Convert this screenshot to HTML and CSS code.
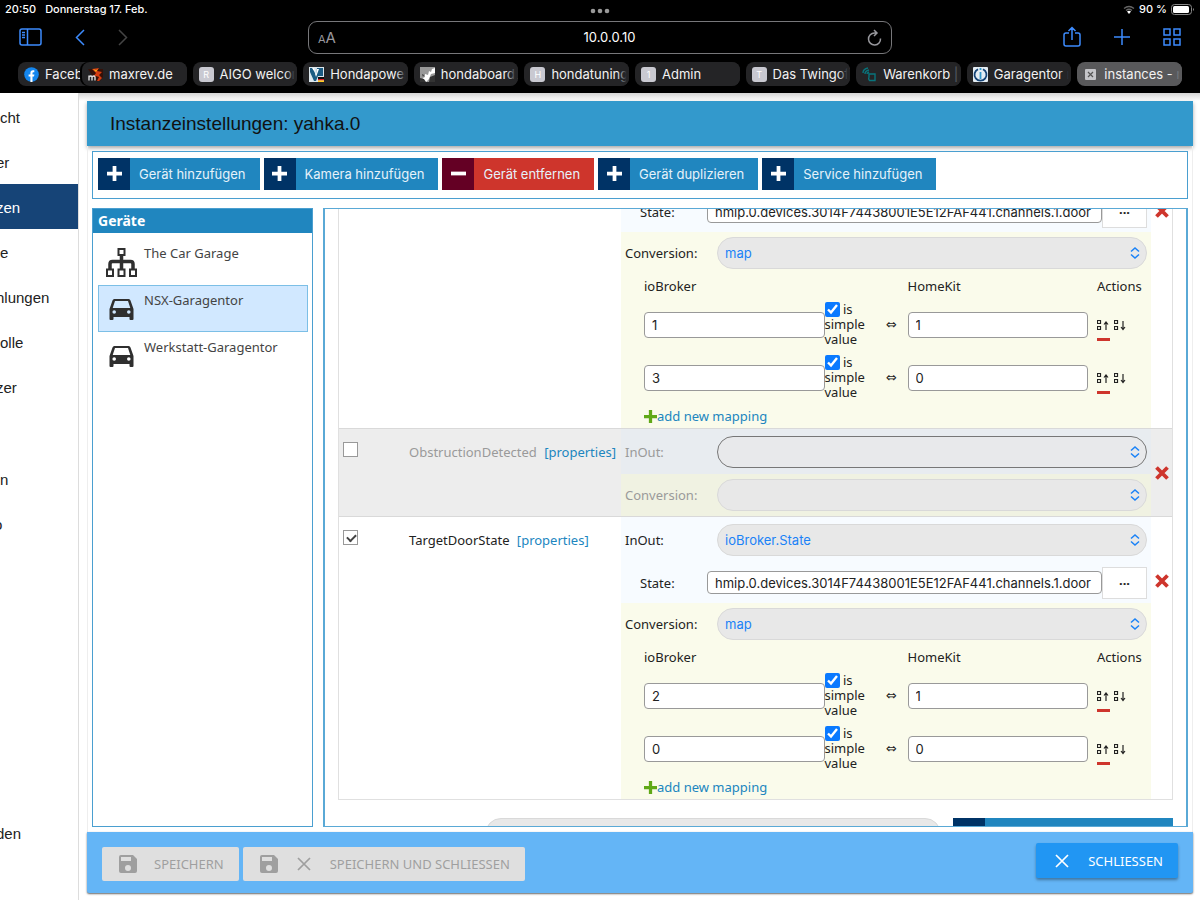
FILE: index.html
```html
<!DOCTYPE html>
<html lang="de">
  <head>
    <meta charset="UTF-8" />
    <meta name="viewport" content="width=device-width, initial-scale=1.0" />
    <title>instances - ioBroker</title>
    <link rel="stylesheet" href="styles.css">
  </head>
  <body>
    <!-- Shared icons -->
    <svg class="sprite" aria-hidden="true">
      <symbol id="plus" viewBox="0 0 16 16"><path d="M6 0h4v6h6v4h-6v6H6v-6H0V6h6z" /></symbol>
      <symbol id="minus" viewBox="0 0 16 16"><path d="M0 6h16v4H0z" /></symbol>
      <symbol id="chevrons" viewBox="0 0 10 12"><path d="M1 4.500L5 1l4 3.500M1 7.500L5 11l4-3.500" fill="none" stroke="currentColor" stroke-width="1.500" /></symbol>
      <symbol id="cross" viewBox="0 0 14 14"><path d="M1.500 1.500l11 11M12.500 1.500l-11 11" fill="none" stroke="currentColor" stroke-width="3.800" /></symbol>
      <symbol id="close" viewBox="0 0 14 14"><path d="M1 1l12 12M13 1L1 13" fill="none" stroke="currentColor" stroke-width="1.700" /></symbol>
      <symbol id="save" viewBox="0 0 18 18"><path fill-rule="evenodd" d="M2 0h12l4 4v12a2 2 0 0 1-2 2H2a2 2 0 0 1-2-2V2a2 2 0 0 1 2-2zM2 2v4h10V2zM9 10a3 3 0 1 0 0 6 3 3 0 0 0 0-6z" /></symbol>
      <symbol id="car" viewBox="0 0 24 21"><path fill-rule="evenodd" d="M5 0h14a2 2 0 0 1 2 1.500L24 10v10a1 1 0 0 1-1 1h-2a1 1 0 0 1-1-1v-2H4v2a1 1 0 0 1-1 1H1a1 1 0 0 1-1-1V10l3-8.500A2 2 0 0 1 5 0zM5.500 2L3.200 9h17.600L18.500 2zM4.700 11.200a1.800 1.800 0 1 0 0 3.600 1.800 1.800 0 0 0 0-3.600zM19.300 11.200a1.800 1.800 0 1 0 0 3.600 1.800 1.800 0 0 0 0-3.600z" /></symbol>
      <symbol id="tree" viewBox="0 0 31 29"><g fill="none" stroke="currentColor"><path d="M15.500 6v16M4 22v-6q0-2.500 2.500-2.500h18q2.500 0 2.500 2.500v6" stroke-width="3.500" /><path d="M12.500 1h6v6h-6zM1 21.500h6V28H1zM12.500 21.500h6V28h-6zM24 21.500h6V28h-6z" fill="#fff" stroke-width="2" /></g></symbol>
      <symbol id="move-up" viewBox="0 0 12 12"><path d="M.5 1.500h3v3h-3zM.5 7.500h3v3h-3zM9 11V3M7 5.500L9 3l2 2.500" fill="none" stroke="currentColor" stroke-width="1.200" /></symbol>
      <symbol id="move-down" viewBox="0 0 12 12"><path d="M.5 1.500h3v3h-3zM.5 7.500h3v3h-3zM9 2v8M7 8l2 2.500L11 8" fill="none" stroke="currentColor" stroke-width="1.200" /></symbol>
    </svg>

    <header class="browser">
      <div class="status">
        <span>20:50</span>
        <span>Donnerstag 17. Feb.</span>
        <svg class="dots" viewBox="0 0 20 6"><circle cx="3" cy="3" r="2.300" /><circle cx="10" cy="3" r="2.300" /><circle cx="17" cy="3" r="2.300" /></svg>
        <div class="power">
          <svg width="12" height="9" viewBox="0 0 12 9"><path d="M1 3.500q5-4 10 0M3 5.500q3-2.500 6 0" fill="none" stroke="#666" stroke-width="1.300" /><path d="M4 6.500q2-1.500 4 0L6 9z" fill="#fff" /></svg>
          <span>90 %</span>
          <svg width="24" height="11" viewBox="0 0 24 11"><rect x=".5" y=".5" width="20" height="10" rx="3" fill="none" stroke="#888" /><rect x="2" y="2" width="16" height="7" rx="1.500" fill="#fff" /><path d="M22 4q2 1.500 0 3z" fill="#888" /></svg>
        </div>
      </div>

      <div class="nav">
        <div class="nav-left">
          <button class="nav-btn" aria-label="Seitenleiste"><svg width="23" height="18" viewBox="0 0 23 18"><path d="M3 1h17q2 0 2 2v12q0 2-2 2H3q-2 0-2-2V3q0-2 2-2zM8.500 1v16M3 4.500h3M3 7h3M3 9.500h3" /></svg></button>
          <button class="nav-btn" aria-label="Zurück"><svg width="10" height="17" viewBox="0 0 10 17"><path d="M9 1L1.500 8.500 9 16" /></svg></button>
          <button class="nav-btn off" aria-label="Vor"><svg width="10" height="17" viewBox="0 0 10 17"><path d="M1 1l7.500 7.500L1 16" /></svg></button>
        </div>
        <div class="address">
          <span class="reader"><small>A</small>A</span>
          <input type="text" value="10.0.0.10" aria-label="Adresse" />
          <button class="nav-btn reload" aria-label="Neu laden"><svg width="15" height="17" viewBox="0 0 15 17"><path d="M13.500 9.500A6 6 0 1 1 7.500 4H10M7 1l3 3-3 3" /></svg></button>
        </div>
        <div class="nav-right">
          <button class="nav-btn" aria-label="Teilen"><svg width="18" height="22" viewBox="0 0 18 22"><path d="M6 7H3Q1 7 1 9v9q0 2 2 2h12q2 0 2-2V9q0-2-2-2h-3M9 14V1.500M5.500 5L9 1.500 12.500 5" /></svg></button>
          <button class="nav-btn" aria-label="Neuer Tab"><svg width="16" height="16" viewBox="0 0 16 16"><path d="M8 0v16M0 8h16" /></svg></button>
          <button class="nav-btn" aria-label="Alle Tabs"><svg width="18" height="18" viewBox="0 0 18 18"><path d="M1 1h6v6H1zM11 1h6v6h-6zM1 11h6v6H1zM11 11h6v6h-6z" /></svg></button>
        </div>
      </div>

      <nav class="tabs">
        <a class="tab first" href="#"><svg class="favicon" viewBox="0 0 15 15"><circle cx="7.500" cy="7.500" r="7.300" fill="#1486ee" /><path d="M6.400 15V9.500H4.600V7.400h1.800V6q0-2.700 2.600-2.700h1.300v1.900H9.200q-.7 0-.7.9v1.300h1.900L10 9.500H8.500V15z" fill="#fff" /></svg>Faceb</a>
        <a class="tab second" href="#"><svg class="favicon" viewBox="0 0 15 15"><path d="M0 2h15v8l-3 4H8z" fill="#351109" /><path d="M4 2l7-1-2 3 5 1-3 3 3 3-3 3H9l2-4-3-1-3 1 3-4z" fill="#d63c10" /><path d="M5 2l3 1 2-1-2 3z" fill="#f6a018" /><path d="M1 13.500V8.500M1 10q2-2 3 0v3.500M4 10q2-2 3 0v3.500" fill="none" stroke="#ddd" stroke-width="1.400" /></svg>maxrev.de</a>
        <a class="tab" href="#"><span class="favicon letter">R</span>AIGO welcor</a>
        <a class="tab" href="#"><svg class="favicon" viewBox="0 0 15 15"><path fill="#dce7ed" d="M0 0h15v15H0z" /><path d="M1 1h3l3 8 1-8h6v8H9L7 14H5L1 5z" fill="#1c5c83" /><path d="M3 1h2l2 9 3-8H8L7 7z" fill="#fff" /><path fill="#111" d="M9 10h6v2H9z" /><path fill="#dc1c22" d="M9 12h6v1.500H9z" /><path fill="#ffce20" d="M9 13.500h6V15H9z" /></svg>Hondapower</a>
        <a class="tab" href="#"><svg class="favicon" viewBox="0 0 15 15"><path fill="#999" d="M0 0h15v15H0z" /><path d="M2 14l1-3 2-1V7l3 1 1-4 2 1 1-3 3-1v5l-4 1-2 5-3 3z" fill="#fff" /><path d="M0 11l4 1 2 3H0zM10 10l5-2v7H9zM2 7l2 1-1 2z" fill="#333" /></svg>hondaboard.</a>
        <a class="tab" href="#"><span class="favicon letter">H</span>hondatuning</a>
        <a class="tab" href="#"><span class="favicon letter">1</span>Admin</a>
        <a class="tab" href="#"><span class="favicon letter">T</span>Das Twingof</a>
        <a class="tab" href="#"><svg class="favicon" viewBox="0 0 15 15"><path d="M7 7h6v6.500H7.500Q6 12 7 10zM1 6q0-4 5-5M3 7q0-3 4-4M5 7q0-1 2-2" fill="none" stroke="#08747c" stroke-width="1.400" /></svg>Warenkorb |</a>
        <a class="tab" href="#"><svg class="favicon" viewBox="0 0 15 15"><rect width="15" height="15" rx="1" fill="#e4edf4" /><path d="M5 2.200a6 6 0 1 0 5 0" fill="none" stroke="#164477" stroke-width="1.800" /><path d="M7.500 5v7M7.500 1v2" stroke="#3399cc" stroke-width="1.800" /></svg>Garagentor n</a>
        <a class="tab active" href="#"><svg class="favicon" viewBox="0 0 15 15"><rect x="2" y="2" width="11" height="11" rx="1" fill="#c5c5c9" /><path d="M5 5l5 5M10 5l-5 5" stroke="#555" stroke-width="1.200" /></svg>instances - n</a>
      </nav>
    </header>

    <div class="workspace">
      <nav class="sidebar">
        <a href="#">cht</a>
        <a class="cut" href="#">er</a>
        <a class="cut active" href="#">zen</a>
        <a href="#">e</a>
        <a class="cut" href="#">hlungen</a>
        <a href="#">olle</a>
        <a class="cut" href="#">zer</a>
        <a class="gap" href="#">n</a>
        <a class="cut edge" href="#">o</a>
        <a class="cut last" href="#">den</a>
      </nav>

      <main class="dialog">
        <h1 class="dialog-title">Instanzeinstellungen: yahka.0</h1>

        <div class="dialog-body">
          <div class="toolbar">
            <button class="tool"><span class="tool-icon"><svg><use href="#plus" /></svg></span>Gerät hinzufügen</button>
            <button class="tool"><span class="tool-icon"><svg><use href="#plus" /></svg></span>Kamera hinzufügen</button>
            <button class="tool danger"><span class="tool-icon"><svg><use href="#minus" /></svg></span>Gerät entfernen</button>
            <button class="tool"><span class="tool-icon"><svg><use href="#plus" /></svg></span>Gerät duplizieren</button>
            <button class="tool"><span class="tool-icon"><svg><use href="#plus" /></svg></span>Service hinzufügen</button>
          </div>

          <div class="panels">
            <section class="devices">
              <h2>Geräte</h2>
              <ul>
                <li><svg class="tree"><use href="#tree" /></svg>The Car Garage</li>
                <li class="selected"><svg class="car"><use href="#car" /></svg>NSX-Garagentor</li>
                <li><svg class="car"><use href="#car" /></svg>Werkstatt-Garagentor</li>
              </ul>
            </section>

            <section class="details">
              <div class="characteristics">
                <!-- CurrentDoorState, scrolled -->
                <div class="row scrolled">
                  <div class="enabled"></div>
                  <div class="name"></div>
                  <div class="config">
                    <div class="line state">
                      <label for="state1">State:</label>
                      <input type="text" id="state1" class="field" value="hmip.0.devices.3014F74438001E5E12FAF441.channels.1.door" />
                      <button class="browse">···</button>
                    </div>
                    <div class="conversion">
                      <div class="line">
                        <label for="conv1">Conversion:</label>
                        <div class="select"><select id="conv1"><option>map</option></select><svg><use href="#chevrons" /></svg></div>
                      </div>
                      <div class="map map-head"><span>ioBroker</span><span></span><span></span><span>HomeKit</span><span class="actions">Actions</span></div>
                      <div class="map">
                        <input type="text" class="field" value="1" aria-label="ioBroker" />
                        <label class="simple"><input type="checkbox" checked /> is simple value</label>
                        <span class="arrow">⇔</span>
                        <input type="text" class="field" value="1" aria-label="HomeKit" />
                        <div class="actions"><button aria-label="Nach oben"><svg><use href="#move-up" /></svg></button><button aria-label="Nach unten"><svg><use href="#move-down" /></svg></button><button class="remove" aria-label="Entfernen"></button></div>
                      </div>
                      <div class="map">
                        <input type="text" class="field" value="3" aria-label="ioBroker" />
                        <label class="simple"><input type="checkbox" checked /> is simple value</label>
                        <span class="arrow">⇔</span>
                        <input type="text" class="field" value="0" aria-label="HomeKit" />
                        <div class="actions"><button aria-label="Nach oben"><svg><use href="#move-up" /></svg></button><button aria-label="Nach unten"><svg><use href="#move-down" /></svg></button><button class="remove" aria-label="Entfernen"></button></div>
                      </div>
                      <a class="add" href="#"><svg><use href="#plus" /></svg>add new mapping</a>
                    </div>
                  </div>
                  <button class="delete top" aria-label="Löschen"><svg><use href="#cross" /></svg></button>
                </div>

                <!-- ObstructionDetected -->
                <div class="row disabled">
                  <div class="enabled"><input type="checkbox" aria-label="ObstructionDetected" /></div>
                  <div class="name">ObstructionDetected <a href="#">[properties]</a></div>
                  <div class="config">
                    <div class="line inout">
                      <label for="inout2">InOut:</label>
                      <div class="select focus"><select id="inout2"><option></option></select><svg><use href="#chevrons" /></svg></div>
                    </div>
                    <div class="conversion">
                      <div class="line">
                        <label for="conv2">Conversion:</label>
                        <div class="select"><select id="conv2"><option></option></select><svg><use href="#chevrons" /></svg></div>
                      </div>
                    </div>
                  </div>
                  <button class="delete" aria-label="Löschen"><svg><use href="#cross" /></svg></button>
                </div>

                <!-- TargetDoorState -->
                <div class="row">
                  <div class="enabled"><input type="checkbox" checked aria-label="TargetDoorState" /></div>
                  <div class="name">TargetDoorState <a href="#">[properties]</a></div>
                  <div class="config">
                    <div class="line inout">
                      <label for="inout3">InOut:</label>
                      <div class="select"><select id="inout3"><option>ioBroker.State</option></select><svg><use href="#chevrons" /></svg></div>
                    </div>
                    <div class="line state">
                      <label for="state3">State:</label>
                      <input type="text" id="state3" class="field" value="hmip.0.devices.3014F74438001E5E12FAF441.channels.1.door" />
                      <button class="browse">···</button>
                    </div>
                    <div class="conversion">
                      <div class="line">
                        <label for="conv3">Conversion:</label>
                        <div class="select"><select id="conv3"><option>map</option></select><svg><use href="#chevrons" /></svg></div>
                      </div>
                      <div class="map map-head"><span>ioBroker</span><span></span><span></span><span>HomeKit</span><span class="actions">Actions</span></div>
                      <div class="map">
                        <input type="text" class="field" value="2" aria-label="ioBroker" />
                        <label class="simple"><input type="checkbox" checked /> is simple value</label>
                        <span class="arrow">⇔</span>
                        <input type="text" class="field" value="1" aria-label="HomeKit" />
                        <div class="actions"><button aria-label="Nach oben"><svg><use href="#move-up" /></svg></button><button aria-label="Nach unten"><svg><use href="#move-down" /></svg></button><button class="remove" aria-label="Entfernen"></button></div>
                      </div>
                      <div class="map">
                        <input type="text" class="field" value="0" aria-label="ioBroker" />
                        <label class="simple"><input type="checkbox" checked /> is simple value</label>
                        <span class="arrow">⇔</span>
                        <input type="text" class="field" value="0" aria-label="HomeKit" />
                        <div class="actions"><button aria-label="Nach oben"><svg><use href="#move-up" /></svg></button><button aria-label="Nach unten"><svg><use href="#move-down" /></svg></button><button class="remove" aria-label="Entfernen"></button></div>
                      </div>
                      <a class="add" href="#"><svg><use href="#plus" /></svg>add new mapping</a>
                    </div>
                  </div>
                  <button class="delete high" aria-label="Löschen"><svg><use href="#cross" /></svg></button>
                </div>
              </div>

              <div class="new-row">
                <div class="select"><select aria-label="Characteristic"><option></option></select></div>
                <button class="tool" aria-label="Hinzufügen"><span class="tool-icon"><svg><use href="#plus" /></svg></span></button>
              </div>
            </section>
          </div>
        </div>

        <footer class="dialog-footer">
          <button class="action" disabled><svg><use href="#save" /></svg>SPEICHERN</button>
          <button class="action" disabled><svg><use href="#save" /></svg><svg class="x"><use href="#close" /></svg>SPEICHERN UND SCHLIESSEN</button>
          <button class="action primary"><svg class="x"><use href="#close" /></svg>SCHLIESSEN</button>
        </footer>
      </main>
    </div>
  </body>
</html>
```

FILE: styles.css
```css
* {
  margin: 0;
  padding: 0;
  box-sizing: border-box;
}
body {
  display: flex;
  flex-direction: column;
  height: 100vh;
  overflow: hidden;
  background: #fff;
  color: #222;
  font-family: "Noto Sans", sans-serif;
  font-size: 13px;
}
a {
  color: #2086bf;
  text-decoration: none;
}
button {
  border: 0;
  background: none;
  color: inherit;
  font: inherit;
  cursor: pointer;
}
svg {
  fill: currentColor;
  flex: none;
}
.sprite {
  position: absolute;
  width: 0;
  height: 0;
}

/* Browser bar */
.browser {
  flex: none;
  height: 93px;
  background: #000;
  color: #fff;
  font-family: Inter, sans-serif;
}
.status {
  position: relative;
  display: flex;
  align-items: center;
  gap: 9px;
  height: 18px;
  padding: 0 5px;
  font-size: 11px;
  font-weight: 500;
}
.dots {
  position: absolute;
  left: 50%;
  top: 8px;
  width: 20px;
  height: 6px;
  margin-left: -10px;
  color: #999;
}
.power {
  display: flex;
  align-items: center;
  gap: 4px;
  margin-left: auto;
}
.nav {
  display: grid;
  grid-template-columns: 289px 1fr 289px;
  align-items: center;
  height: 38px;
  padding: 0 19px;
}
.nav-left,
.nav-right {
  display: flex;
  align-items: center;
  gap: 33px;
}
.nav-right {
  justify-content: flex-end;
}
.nav-btn {
  display: flex;
  color: #3d8bfd;
}
.nav-btn svg {
  fill: none;
  stroke: currentColor;
  stroke-width: 1.5;
}
.nav-btn.off {
  color: #444;
}
.address {
  display: flex;
  align-items: center;
  height: 33px;
  padding: 0 9px;
  border: 1px solid #77777a;
  border-radius: 9px;
}
.address input {
  flex: 1;
  min-width: 0;
  padding-left: 16px;
  border: 0;
  background: none;
  color: #fff;
  font: 13px Inter, sans-serif;
  text-align: center;
}
.reader {
  color: #98989d;
  font-size: 15px;
}
.reader small {
  font-size: 11px;
}
.nav-btn.reload {
  color: #98989d;
}
.tabs {
  display: flex;
  gap: 6px;
  padding: 6px 18px 0;
}
.tab {
  position: relative;
  display: flex;
  flex: 1 1 0;
  align-items: center;
  gap: 6px;
  min-width: 0;
  height: 24px;
  padding-left: 6px;
  border-radius: 8px;
  background: #242426;
  color: #f2f2f2;
  font-size: 13px;
  white-space: nowrap;
  overflow: hidden;
}
.tab::after {
  content: "";
  position: absolute;
  top: 0;
  right: 0;
  width: 12px;
  height: 100%;
  background: linear-gradient(to right, transparent, #242426 80%);
}
.tab.first {
  flex: 0 0 75px;
  margin-right: -17px;
}
.tab.second {
  box-shadow: -2px 0 0 #000;
}
.tab.active {
  background: #59595b;
}
.tab.active::after {
  background: linear-gradient(to right, transparent, #59595b 80%);
}
.favicon {
  flex: none;
  width: 15px;
  height: 15px;
}
.letter {
  border-radius: 3px;
  background: #c9c9d1;
  color: #fff;
  font-size: 9px;
  line-height: 15px;
  text-align: center;
}

/* Admin menu */
.workspace {
  display: flex;
  flex: 1;
  min-height: 0;
  background: linear-gradient(#d5d5d5, #fff 8px);
}
.sidebar {
  display: flex;
  flex-direction: column;
  flex: none;
  width: 79px;
  padding: 1px 0 45px;
  border-right: 1px solid #ddd;
  background: #fff;
  overflow: hidden;
  font: 15px "Liberation Sans", Arial, sans-serif;
}
.sidebar a {
  flex: none;
  height: 45px;
  color: #222;
  line-height: 48px;
}
.sidebar .cut {
  text-indent: -4px;
}
.sidebar .edge {
  text-indent: -6px;
}
.sidebar .active {
  background: #164477;
  color: #fff;
}
.sidebar .gap {
  margin-top: 47px;
}
.sidebar .last {
  margin-top: auto;
}

/* Dialog */
.dialog {
  display: flex;
  flex: 1;
  flex-direction: column;
  min-width: 0;
  margin: 8px 7px 7px 8px;
}
.dialog-title {
  flex: none;
  height: 45px;
  padding-left: 23px;
  background: #3399cc;
  box-shadow: 0 2px 4px rgba(0, 0, 0, 0.35);
  color: #111;
  font: 19px/46px "Liberation Sans", Arial, sans-serif;
}
.dialog-body {
  display: flex;
  flex: 1;
  flex-direction: column;
  gap: 9px;
  min-height: 0;
  padding: 5px 4px;
  border: solid #eee;
  border-width: 0 1px;
}
.toolbar {
  display: flex;
  flex: none;
  gap: 4px;
  padding: 6px 5px 8px;
  border: 1px solid #4a9fd0;
}
.tool {
  display: flex;
  align-items: center;
  gap: 9px;
  height: 32px;
  padding-right: 14px;
  background: #2086bf;
  color: #e6f2fa;
  font: 13px Inter, sans-serif;
}
.tool-icon {
  display: flex;
  align-items: center;
  justify-content: center;
  width: 32px;
  height: 32px;
  padding-bottom: 2px;
  background: #003366;
  color: #fff;
}
.tool-icon svg {
  width: 15px;
  height: 15px;
}
.tool.danger {
  background: #ce352c;
}
.danger .tool-icon {
  background: #640024;
}
.panels {
  display: grid;
  flex: 1;
  grid-template-columns: 221px minmax(0, 1fr);
  gap: 10px;
  min-height: 0;
}
.devices {
  border: 1px solid #4a9fd0;
}
.devices h2 {
  height: 24px;
  padding-left: 5px;
  background: #2086bf;
  color: #fff;
  font-size: 14px;
  line-height: 24px;
}
.devices ul {
  padding: 5px 4px 5px 5px;
  list-style: none;
}
.devices li {
  display: flex;
  gap: 7px;
  height: 47px;
  padding: 4px 7px;
  border: 1px solid transparent;
  color: #444;
  line-height: 20px;
}
.devices svg {
  width: 31px;
  color: #2f2f2f;
}
.devices .tree {
  height: 29px;
  margin-top: 5px;
}
.devices .car {
  height: 21px;
  margin-top: 9px;
}
.devices .selected {
  border-color: #7cbfe6;
  background: #d1e8ff;
}

/* Characteristics */
.details {
  padding: 0 13px;
  border: solid #5aa9d6;
  border-width: 1px 2px;
  overflow: hidden;
}
.characteristics {
  border: solid #e0e0e0;
  border-width: 0 1px 1px;
}
.row {
  display: grid;
  grid-template-columns: 66px 216px minmax(0, 1fr) 21px;
  border-top: 1px solid #d9d9d9;
}
.row.scrolled {
  margin-top: -19px;
}
.enabled {
  padding: 13px 4px;
}
.enabled input {
  display: block;
  width: 15px;
  height: 15px;
  border: 1px solid #999;
  background: #fff;
  appearance: none;
}
.enabled input:checked::before {
  content: "";
  display: block;
  width: 7px;
  height: 4px;
  margin: 3px;
  border: solid #444;
  border-width: 0 0 2px 2px;
  transform: rotate(-45deg);
}
.name {
  padding: 0 4px;
  line-height: 46px;
}
.name a {
  margin-left: 4px;
}
.config {
  background: #f7fbff;
}
.line {
  display: grid;
  grid-template-columns: 92px minmax(0, 1fr);
  align-items: center;
  height: 42px;
  padding: 0 4px;
}
.line.inout {
  height: 45px;
}
.line.state {
  grid-template-columns: 67px minmax(0, 1fr) 45px;
  height: 41px;
  padding-left: 19px;
}
.conversion {
  background: #fafbeb;
}
.select {
  position: relative;
}
.select select {
  display: block;
  width: 100%;
  height: 32px;
  padding: 0 7px;
  border: 1px solid #d9d9d9;
  border-radius: 16px;
  background: #e8e8e8;
  color: #1a82f7;
  font: 13px Inter, sans-serif;
  appearance: none;
}
.select svg {
  position: absolute;
  top: 10px;
  right: 7px;
  width: 10px;
  height: 12px;
  color: #1a82f7;
  pointer-events: none;
}
.field {
  width: 100%;
  min-width: 0;
  height: 26px;
  padding: 0 7px;
  border: 1px solid #999;
  border-radius: 4px;
  background: #fff;
  color: #222;
  font: 13px Inter, sans-serif;
}
.state .field {
  height: 23px;
}
.browse {
  height: 32px;
  border: 1px solid #ddd;
  background: #fff;
  font-weight: bold;
}
.map {
  display: grid;
  grid-template-columns: minmax(0, 1fr) 51px 32px minmax(0, 1fr) 63px;
  align-items: center;
  height: 53px;
  padding-left: 23px;
}
.simple {
  line-height: 15px;
}
.simple input {
  width: 15px;
  height: 15px;
  vertical-align: top;
  accent-color: #0a7aff;
}
.arrow {
  font-family: "DejaVu Sans", sans-serif;
  text-align: center;
}
.actions {
  display: flex;
  flex-wrap: wrap;
  gap: 7px 5px;
  padding: 10px 0 0 9px;
}
.map-head {
  height: 24px;
}
.map-head .actions {
  padding-top: 0;
}
.map .actions button {
  display: block;
  height: 12px;
}
.actions svg {
  display: block;
  width: 12px;
  height: 12px;
}
.map .actions .remove {
  width: 13px;
  height: 3px;
  margin-right: 20px;
  background: #ce352c;
}
.add {
  display: flex;
  align-items: center;
  height: 24px;
  padding-left: 23px;
}
.add svg {
  width: 13px;
  height: 13px;
  color: #60a917;
}
.delete {
  display: flex;
  align-items: center;
  justify-content: center;
  color: #ce352c;
}
.delete svg {
  width: 14px;
  height: 14px;
}
.delete.high {
  align-items: flex-start;
  padding-top: 57px;
}
.delete.top {
  align-items: flex-start;
  padding-top: 13px;
}
.disabled {
  background: #ededed;
  color: #9a9a9a;
}
.disabled .config {
  background: #e8ecf0;
}
.disabled .conversion {
  background: #f0f2e2;
}
.focus select {
  border-color: #777;
  background: #e8e9eb;
}
.new-row {
  display: grid;
  grid-template-columns: 456px 220px;
  gap: 12px;
  justify-content: end;
  padding-top: 18px;
}

/* Footer */
.dialog-footer {
  display: flex;
  flex: none;
  align-items: flex-start;
  gap: 4px;
  height: 61px;
  padding: 15px 15px 0;
  border-radius: 0 0 2px 2px;
  background: #64b5f6;
  box-shadow: 0 1px 2px rgba(0, 0, 0, 0.6);
}
.action {
  display: flex;
  align-items: center;
  gap: 17px;
  height: 34px;
  padding: 0 15px 0 17px;
  border-radius: 2px;
  background: #dfdfdf;
  color: #9f9f9f;
  font-size: 13px;
}
.action svg {
  width: 18px;
  height: 18px;
}
.action .x {
  padding: 2px;
}
.action.primary {
  height: 35px;
  margin: -4px 0 0 auto;
  background: #2196f3;
  box-shadow: 0 2px 3px rgba(0, 0, 0, 0.35);
  color: #fff;
}
```
